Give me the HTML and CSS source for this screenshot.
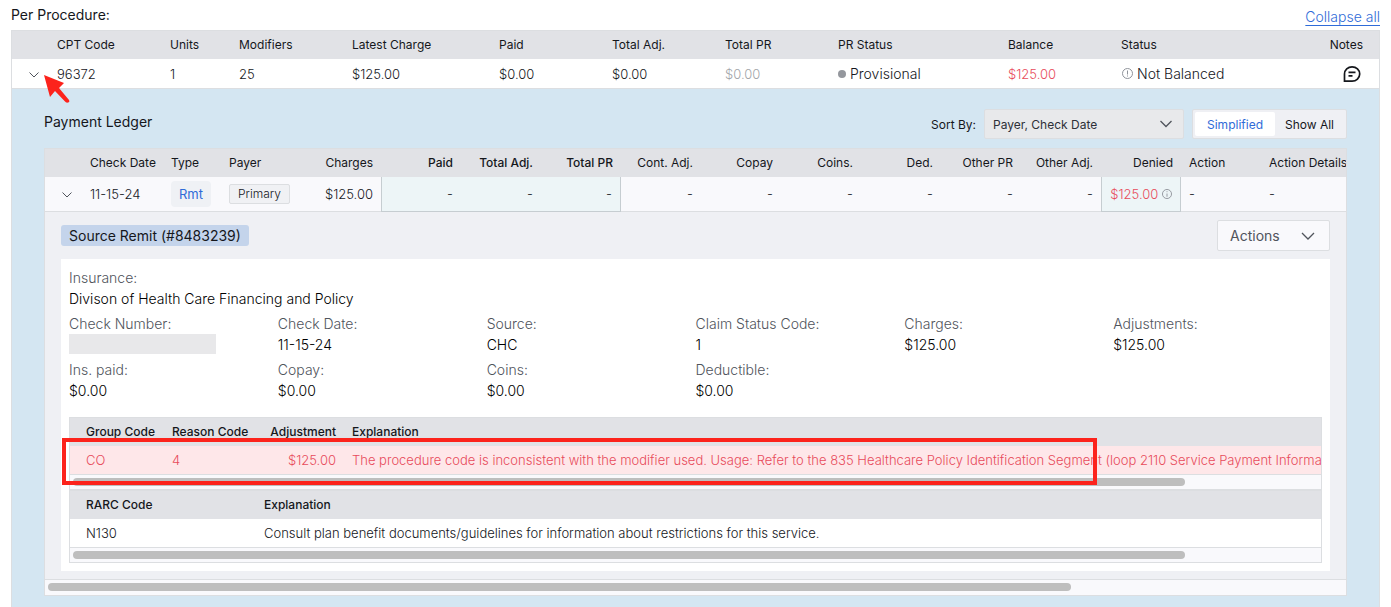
FILE: index.html
```
<!DOCTYPE html>
<html lang="en">
<head>
    <meta charset="UTF-8">
    <meta name="viewport" content="width=device-width, initial-scale=1.0">
    <title>Payment Ledger</title>
    <link rel="stylesheet" href="styles.css">
</head>
<body>
    <main class="page">
        <div class="page-header">
            <h1 class="title">Per Procedure:</h1>
            <a class="collapse-link" href="#">Collapse all</a>
        </div>

        <section class="procedures">
            <table class="table procedure-table">
                <colgroup>
                    <col class="p-toggle"><col class="p-code"><col class="p-units"><col class="p-mod">
                    <col class="p-charge"><col class="p-money"><col class="p-money"><col class="p-money">
                    <col class="p-prstatus"><col class="p-money"><col class="p-status"><col class="p-notes">
                </colgroup>
                <thead>
                    <tr>
                        <th></th>
                        <th>CPT Code</th>
                        <th>Units</th>
                        <th>Modifiers</th>
                        <th>Latest Charge</th>
                        <th>Paid</th>
                        <th>Total Adj.</th>
                        <th>Total PR</th>
                        <th>PR Status</th>
                        <th>Balance</th>
                        <th>Status</th>
                        <th class="notes">Notes</th>
                    </tr>
                </thead>
                <tbody>
                    <tr>
                        <td class="toggle">
                            <button class="icon-btn" aria-label="Collapse procedure">
                                <svg width="10" height="6" viewBox="0 0 10 6"><path d="M.5 .5l4.500 4.500 4.500-4.500"/></svg>
                            </button>
                            <!-- callout arrow -->
                            <svg class="arrow" width="28" height="30" viewBox="0 0 28 30"><path d="M0 0L20 8L15 13L25 25Q26 27 24 27.500Q22 28 21 26.500L11 16L6 22Z"/></svg>
                        </td>
                        <td>96372</td>
                        <td>1</td>
                        <td>25</td>
                        <td>$125.00</td>
                        <td>$0.00</td>
                        <td>$0.00</td>
                        <td class="muted">$0.00</td>
                        <td class="large"><span class="dot"></span>Provisional</td>
                        <td class="red">$125.00</td>
                        <td class="large"><svg class="info" width="11" height="11" viewBox="0 0 11 11"><circle cx="5.500" cy="5.500" r="5"/><path d="M5.500 2.500v4M5.500 7.500v1"/></svg>Not Balanced</td>
                        <td class="notes">
                            <button class="icon-btn note-btn" aria-label="Notes">
                                <svg width="18" height="18" viewBox="0 0 18 18"><path d="M1.500 16.200V9a7.600 7.200 0 1 1 7.600 7.200zM5.500 7.300h7M5.500 10.800h4"/></svg>
                            </button>
                        </td>
                    </tr>
                </tbody>
            </table>

            <div class="ledger-area">
                <div class="ledger-header">
                    <h2 class="title">Payment Ledger</h2>
                    <div class="controls">
                        <label for="sort">Sort By:</label>
                        <div class="select-wrap">
                            <select id="sort">
                                <option>Payer, Check Date</option>
                                <option>Check Date</option>
                            </select>
                            <svg class="chevron" width="12" height="8" viewBox="0 0 12 8"><path d="M.5 1l5.500 5.500 5.500-5.500"/></svg>
                        </div>
                        <div class="segmented">
                            <button class="active">Simplified</button>
                            <button>Show All</button>
                        </div>
                    </div>
                </div>

                <div class="ledger">
                    <div class="table-scroll">
                        <table class="table ledger-table">
                            <colgroup>
                                <col class="l-toggle"><col class="l-date"><col class="l-type">
                                <col span="12" class="l-num"><col class="l-num"><col class="l-details">
                            </colgroup>
                            <thead>
                                <tr>
                                    <th></th>
                                    <th>Check Date</th>
                                    <th>Type</th>
                                    <th>Payer</th>
                                    <th class="num">Charges</th>
                                    <th class="num strong">Paid</th>
                                    <th class="num strong">Total Adj.</th>
                                    <th class="num strong">Total PR</th>
                                    <th class="num">Cont. Adj.</th>
                                    <th class="num">Copay</th>
                                    <th class="num">Coins.</th>
                                    <th class="num">Ded.</th>
                                    <th class="num">Other PR</th>
                                    <th class="num">Other Adj.</th>
                                    <th class="num">Denied</th>
                                    <th>Action</th>
                                    <th>Action Details</th>
                                </tr>
                            </thead>
                            <tbody>
                                <tr>
                                    <td class="toggle">
                                        <button class="icon-btn" aria-label="Collapse remit">
                                            <svg width="10" height="6" viewBox="0 0 10 6"><path d="M.5 .5l4.500 4.500 4.500-4.500"/></svg>
                                        </button>
                                    </td>
                                    <td>11-15-24</td>
                                    <td><span class="badge-type">Rmt</span></td>
                                    <td><span class="badge-payer">Primary</span></td>
                                    <td class="num">$125.00</td>
                                    <td class="num tint tint-first">-</td>
                                    <td class="num tint">-</td>
                                    <td class="num tint tint-last">-</td>
                                    <td class="num">-</td>
                                    <td class="num">-</td>
                                    <td class="num">-</td>
                                    <td class="num">-</td>
                                    <td class="num">-</td>
                                    <td class="num">-</td>
                                    <td class="num tint tint-first tint-last denied">$125.00 <svg class="info" width="10" height="10" viewBox="0 0 11 11"><circle cx="5.500" cy="5.500" r="5"/><path d="M5.500 5v3.500M5.500 2.500v1"/></svg></td>
                                    <td>-</td>
                                    <td>-</td>
                                </tr>
                            </tbody>
                        </table>
                    </div>

                    <div class="detail">
                        <div class="detail-header">
                            <span class="remit">Source Remit (#8483239)</span>
                            <button class="actions">Actions
                                <svg class="chevron" width="14" height="8" viewBox="0 0 14 8"><path d="M1 1l6 6 6-6"/></svg>
                            </button>
                        </div>

                        <div class="card">
                            <dl class="fields">
                                <div class="wide"><dt>Insurance:</dt><dd>Divison of Health Care Financing and Policy</dd></div>
                                <div><dt>Check Number:</dt><dd><span class="redacted"></span></dd></div>
                                <div><dt>Check Date:</dt><dd>11-15-24</dd></div>
                                <div><dt>Source:</dt><dd>CHC</dd></div>
                                <div><dt>Claim Status Code:</dt><dd>1</dd></div>
                                <div><dt>Charges:</dt><dd>$125.00</dd></div>
                                <div><dt>Adjustments:</dt><dd>$125.00</dd></div>
                                <div><dt>Ins. paid:</dt><dd>$0.00</dd></div>
                                <div><dt>Copay:</dt><dd>$0.00</dd></div>
                                <div><dt>Coins:</dt><dd>$0.00</dd></div>
                                <div><dt>Deductible:</dt><dd>$0.00</dd></div>
                            </dl>

                            <div class="highlighted">
                                <div class="codes">
                                    <table class="table codes-table">
                                        <colgroup><col class="c-group"><col class="c-reason"><col class="c-adj"><col></colgroup>
                                        <thead>
                                            <tr><th>Group Code</th><th>Reason Code</th><th class="num">Adjustment</th><th>Explanation</th></tr>
                                        </thead>
                                        <tbody>
                                            <tr class="error-row">
                                                <td>CO</td>
                                                <td>4</td>
                                                <td class="num">$125.00</td>
                                                <td>The procedure code is inconsistent with the modifier used. Usage: Refer to the 835 Healthcare Policy Identification Segment (loop 2110 Service Payment Informatio</td>
                                            </tr>
                                        </tbody>
                                    </table>
                                    <div class="scrollbar"><div class="thumb"></div></div>
                                </div>
                                <div class="callout"></div>
                            </div>

                            <div class="codes">
                                <table class="table codes-table">
                                    <colgroup><col class="c-rarc"><col></colgroup>
                                    <thead>
                                        <tr><th>RARC Code</th><th>Explanation</th></tr>
                                    </thead>
                                    <tbody>
                                        <tr>
                                            <td>N130</td>
                                            <td>Consult plan benefit documents/guidelines for information about restrictions for this service.</td>
                                        </tr>
                                    </tbody>
                                </table>
                                <div class="scrollbar"><div class="thumb"></div></div>
                            </div>
                        </div>
                    </div>
                    <div class="scrollbar ledger-bar"><div class="thumb"></div></div>
                </div>
            </div>
        </section>
    </main>
</body>
</html>
```
FILE: styles.css
```
* {
    box-sizing: border-box;
}
body {
    margin: 0;
    font-family: Inter, "Open Sans", sans-serif;
    font-size: 13px;
    color: #15171c;
    background: #fff;
}
button, select {
    font-family: inherit;
    color: inherit;
    cursor: pointer;
}
svg {
    fill: none;
    stroke: #50545c;
}
.page {
    display: flex;
    flex-direction: column;
    min-height: 100vh;
    padding: 0 11px;
}
.page-header {
    display: flex;
    justify-content: space-between;
    height: 30px;
    line-height: 30px;
}
.title {
    margin: 0;
    font-size: 14px;
    font-weight: 400;
}
.collapse-link {
    padding-top: 2px;
    font-size: 14px;
    font-weight: 300;
    color: #2f6bd8;
    text-underline-offset: 3px;
}

/* shared tables */
.table {
    width: 100%;
    table-layout: fixed;
    border-collapse: separate;
    border-spacing: 0;
    white-space: nowrap;
}
.table th {
    height: 28px;
    padding: 0 8px 2px;
    font-size: 12px;
    font-weight: 400;
    text-align: left;
    background: #e1e2e6;
}
.table td {
    height: 29px;
    padding: 0 8px;
    font-size: 13px;
    font-weight: 300;
    border-bottom: 1px solid #dcdee1;
}
.table .num {
    text-align: right;
}
.table .strong {
    font-weight: 500;
}
.icon-btn {
    display: inline-flex;
    padding: 0;
    border: 0;
    background: none;
    vertical-align: middle;
}
.chevron {
    stroke-width: 1.3;
}
.info {
    stroke: #8f939a;
}

/* procedures */
.procedures {
    display: flex;
    flex-direction: column;
    flex: 1;
    border: 1px solid #dcdee1;
    border-bottom: 0;
}
.procedure-table td {
    height: 30px;
}
.procedure-table .large {
    font-size: 14px;
}
.procedure-table .notes {
    padding-right: 16px;
    text-align: right;
}
.p-toggle { width: 37px; }
.p-code { width: 113px; }
.p-units { width: 69px; }
.p-mod { width: 113px; }
.p-charge { width: 147px; }
.p-money { width: 113px; }
.p-prstatus { width: 170px; }
.p-status { width: 170px; }
.p-notes { width: 96px; }
.table .toggle {
    position: relative;
    padding-left: 17px;
}
.arrow {
    position: absolute;
    left: 32px;
    top: 16px;
    z-index: 2;
    fill: #fc231c;
    stroke: none;
}
.dot {
    display: inline-block;
    width: 8px;
    height: 8px;
    margin-right: 4px;
    border-radius: 50%;
    background: #94979d;
    vertical-align: 1px;
}
.large .info {
    margin: 0 4px 0 1px;
    vertical-align: 0;
}
.note-btn {
    margin-right: 2px;
}
.note-btn svg {
    stroke: #15171c;
    stroke-width: 1.7;
}
.table .muted {
    color: #a2a4a9;
}
.red, .table .denied, .error-row {
    color: #e84b5b;
}

/* payment ledger */
.ledger-area {
    flex: 1;
    padding: 20px 32px 12px;
    background: #d4e6f2;
}
.ledger-header {
    display: flex;
    justify-content: space-between;
    margin-bottom: 9px;
}
.ledger-header .title {
    line-height: 26px;
}
.controls {
    display: flex;
    align-items: center;
    gap: 8px;
    font-size: 12px;
}
.select-wrap {
    position: relative;
}
.select-wrap select {
    width: 200px;
    height: 30px;
    padding: 0 8px;
    font-size: 12px;
    color: #2d3038;
    border: 1px solid #dcdee1;
    border-radius: 2px;
    background: #e8e9eb;
    appearance: none;
}
.select-wrap .chevron {
    position: absolute;
    right: 12px;
    top: 11px;
    pointer-events: none;
}
.segmented {
    display: flex;
    height: 30px;
    padding: 2px;
    border: 1px solid #dcdee1;
    border-radius: 2px;
    background: #eff0f4;
}
.segmented button {
    width: 69px;
    padding: 0;
    border: 0;
    border-radius: 2px;
    font-size: 12px;
    background: none;
}
.segmented .active {
    width: 80px;
    color: #2f6bd8;
    background: #fff;
}
.ledger {
    border: 1px solid #dcdee1;
    background: #eff0f4;
}
.table-scroll {
    overflow: hidden;
}
.ledger-table {
    width: 1652px;
}
.l-toggle { width: 37px; }
.l-date { width: 81px; }
.l-type { width: 58px; }
.l-num { width: 80px; }
.l-details { width: 436px; }
.ledger-table td {
    height: 35px;
    background: #f9f9fc;
}
.ledger-table .tint {
    background: #edf5f7;
    border-bottom-color: #c6cdd1;
}
.ledger-table .tint-first {
    border-left: 1px solid #c6cdd1;
}
.ledger-table .tint-last {
    border-right: 1px solid #c6cdd1;
}
.ledger-table .denied {
    padding-left: 0;
}
.denied .info {
    vertical-align: 0;
}
.badge-type {
    display: inline-block;
    padding: 0 8px;
    font-weight: 400;
    line-height: 26px;
    border-radius: 4px;
    color: #2f6bd8;
    background: #eff1f5;
}
.badge-payer {
    display: inline-block;
    padding: 0 8px;
    font-size: 12px;
    line-height: 18px;
    border: 1px solid #dcdee1;
    border-radius: 2px;
    color: #15171c;
    background: #f0f1f4;
}

/* remit detail */
.detail {
    padding: 8px 16px;
}
.detail-header {
    display: flex;
    align-items: center;
    justify-content: space-between;
    margin-bottom: 8px;
}
.remit {
    padding: 0 8px;
    font-size: 14px;
    line-height: 21px;
    border-radius: 3px;
    background: #c4d4eb;
}
.actions {
    display: flex;
    align-items: center;
    justify-content: space-between;
    width: 113px;
    height: 31px;
    padding: 0 14px 0 12px;
    font-size: 14px;
    color: #50545c;
    border: 1px solid #dcdee1;
    border-radius: 2px;
    background: #f9f9fc;
}
.card {
    padding: 8px;
    background: #fff;
}
.fields {
    display: grid;
    grid-template-columns: repeat(6, 1fr);
    row-gap: 4px;
    margin: 0 0 16px;
    font-size: 14px;
    font-weight: 300;
    line-height: 21px;
}
.fields .wide {
    grid-column: 1 / -1;
}
.fields dt {
    color: #50545c;
}
.fields dd {
    height: 21px;
    margin: 0;
    color: #000;
}
.redacted {
    display: block;
    width: 147px;
    height: 20px;
    background: #e8e8ea;
}
.highlighted {
    position: relative;
}
.callout {
    position: absolute;
    top: 21px;
    left: -7px;
    width: 1035px;
    height: 47px;
    border: 4px solid #fc231c;
}
.codes {
    overflow: hidden;
    border: 1px solid #dcdee1;
}
.codes-table th {
    font-weight: 500;
}
.codes-table th:first-child, .codes-table td:first-child {
    padding-left: 16px;
}
.codes-table td:last-child {
    padding-right: 0;
}
.c-group { width: 94px; }
.c-reason { width: 97px; }
.c-adj { width: 83px; }
.c-rarc { width: 186px; }
.error-row td {
    background: #fee7e9;
}
.scrollbar {
    height: 14px;
    padding: 3px;
    background: #f9f9fc;
}
.thumb {
    width: calc(89% + 4px);
    height: 8px;
    border-radius: 4px;
    background: #bebebe;
}
.ledger-bar {
    border-top: 1px solid #dcdee1;
    height: 16px;
}
.ledger-bar .thumb {
    width: 79%;
}
```
